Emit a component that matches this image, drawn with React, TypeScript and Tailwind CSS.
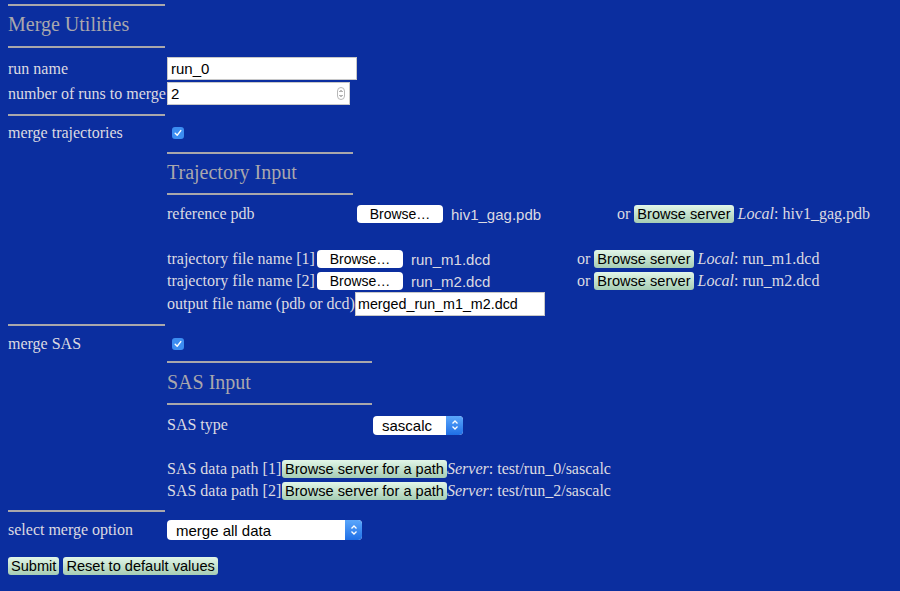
const Hr = ({ w }: { w: string }) => <div className={`h-[2px] bg-[#a9a7ab] ${w}`} />;

const Check = () => (
  <span className="ml-[5px] flex h-[12px] w-[12px] items-center justify-center rounded-[3px] bg-[#3c8df1]">
    <svg width="8" height="8" viewBox="0 0 8 8">
      <path d="M1.2 4.2 L3.2 6.2 L6.8 1.6" fill="none" stroke="#fff" strokeWidth="1.4" strokeLinecap="round" strokeLinejoin="round" />
    </svg>
  </span>
);

const FileButton = () => (
  <span className="flex h-[18px] w-[86px] items-center justify-center rounded-[4px] bg-white font-['Liberation_Sans'] text-[14px] text-black">
    Browse…
  </span>
);

const GreenButton = ({ children }: { children: React.ReactNode }) => (
  <span className="flex h-[18px] items-center rounded-[3px] bg-gradient-to-b from-[#e2f6e8] to-[#a6cdb4] px-[3px] font-['Liberation_Sans'] text-[14.6px] leading-none text-black">
    {children}
  </span>
);

const SelectBox = ({ label, w, h }: { label: string; w: string; h: string }) => (
  <span className={`flex items-center overflow-hidden rounded-[4px] bg-white font-['Liberation_Sans'] text-[15px] text-black ${w} ${h}`}>
    <span className="flex-1 pl-[9px]">{label}</span>
    <span className="flex h-full w-[17px] items-center justify-center bg-gradient-to-b from-[#5aa6fb] to-[#1e6fe6]">
      <svg width="8" height="12" viewBox="0 0 8 12">
        <path d="M1.5 4.5 L4 2 L6.5 4.5 M1.5 7.5 L4 10 L6.5 7.5" fill="none" stroke="#fff" strokeWidth="1.3" />
      </svg>
    </span>
  </span>
);

const OrLocal = ({ file }: { file: string }) => (
  <span className="flex items-center gap-[3px]">
    <span className="mr-[1px]">or</span>
    <GreenButton>Browse server</GreenButton>
    <span className="ml-[1px]">
      <i>Local</i>: {file}
    </span>
  </span>
);

export default function App() {
  return (
    <div className="min-h-screen bg-[#0b2e9f] pl-2 pt-[4px] font-['Liberation_Serif'] text-[16px] leading-none text-[#dcdae2]">
      <Hr w="w-[157px]" />
      <h2 className="pb-[10px] pt-[7px] text-[20px] leading-[23px] text-[#a9a7ad]">Merge Utilities</h2>
      <Hr w="w-[157px]" />

      <div className="mt-[9px] flex h-[23px] items-center">
        <span className="w-[159px]">run name</span>
        <span className="flex h-[23px] w-[190px] items-center border border-[#c8c8c8] bg-white pl-[3px] font-['Liberation_Sans'] text-[15px] text-black">
          run_0
        </span>
      </div>
      <div className="mt-[2px] flex h-[23px] items-center">
        <span className="w-[159px] whitespace-nowrap">number of runs to merge</span>
        <span className="flex h-[23px] w-[183px] items-center justify-between border border-[#c8c8c8] bg-white pl-[3px] pr-[4px] font-['Liberation_Sans'] text-[15px] text-black">
          2
          <span className="flex h-[13px] w-[8px] flex-col items-center justify-center rounded-[4px] border border-[#b8b8b8]">
            <svg width="6" height="9" viewBox="0 0 6 9">
              <path d="M1.5 3 L3 1.5 L4.5 3 M1.5 6 L3 7.5 L4.5 6" fill="none" stroke="#555" strokeWidth="0.9" />
            </svg>
          </span>
        </span>
      </div>
      <div className="mt-[9px]">
        <Hr w="w-[157px]" />
      </div>

      <div className="flex h-[34px] items-center">
        <span className="w-[159px]">merge trajectories</span>
        <Check />
      </div>

      <div className="ml-[159px]">
        <div className="mt-[2px]">
          <Hr w="w-[186px]" />
        </div>
        <h3 className="pb-[9px] pt-[7px] text-[20px] leading-[23px] text-[#a9a7ad]">Trajectory Input</h3>
        <Hr w="w-[186px]" />

        <div className="mt-[7px] flex h-[24px] items-center">
          <span className="w-[190px]">reference pdb</span>
          <span className="flex w-[260px] items-center gap-[8px]">
            <FileButton />
            <span className="font-['Liberation_Sans'] text-[15px]">hiv1_gag.pdb</span>
          </span>
          <OrLocal file="hiv1_gag.pdb" />
        </div>

        {[1, 2].map((n) => (
          <div key={n} className={`flex h-[22px] items-center ${n === 1 ? 'mt-[22px]' : ''}`}>
            <span className="w-[150px] whitespace-nowrap">trajectory file name [{n}]</span>
            <span className="flex w-[260px] items-center gap-[8px]">
              <FileButton />
              <span className="font-['Liberation_Sans'] text-[15px]">run_m{n}.dcd</span>
            </span>
            <OrLocal file={`run_m${n}.dcd`} />
          </div>
        ))}

        <div className="flex h-[24px] items-center">
          <span className="w-[188px] whitespace-nowrap">output file name (pdb or dcd)</span>
          <span className="flex h-[24px] w-[190px] items-center border border-[#c8c8c8] bg-white pl-[2px] font-['Liberation_Sans'] text-[14.3px] text-black">
            merged_run_m1_m2.dcd
          </span>
        </div>
      </div>

      <div className="mt-[8px]">
        <Hr w="w-[157px]" />
      </div>
      <div className="flex h-[35px] items-center">
        <span className="w-[159px]">merge SAS</span>
        <Check />
      </div>

      <div className="ml-[159px]">
        <Hr w="w-[205px]" />
        <h3 className="pb-[9px] pt-[8px] text-[20px] leading-[23px] text-[#a9a7ad]">SAS Input</h3>
        <Hr w="w-[205px]" />

        <div className="mt-[8px] flex h-[24px] items-center">
          <span className="w-[206px]">SAS type</span>
          <SelectBox label="sascalc" w="w-[90px]" h="h-[19px]" />
        </div>

        {[0, 2].map((r, i) => (
          <div key={r} className={`flex h-[22px] items-center ${i === 0 ? 'mt-[21px]' : ''}`}>
            <span className="w-[115px] whitespace-nowrap">SAS data path [{i + 1}]</span>
            <GreenButton>Browse server for a path</GreenButton>
            <span>
              <i>Server</i>: test/run_{r}/sascalc
            </span>
          </div>
        ))}
      </div>

      <div className="mt-[8px]">
        <Hr w="w-[157px]" />
      </div>
      <div className="mt-[8px] flex h-[20px] items-center">
        <span className="w-[159px]">select merge option</span>
        <SelectBox label="merge all data" w="w-[195px]" h="h-[20px]" />
      </div>

      <div className="mt-[17px] flex gap-[4px]">
        <GreenButton>Submit</GreenButton>
        <GreenButton>Reset to default values</GreenButton>
      </div>
    </div>
  );
}
